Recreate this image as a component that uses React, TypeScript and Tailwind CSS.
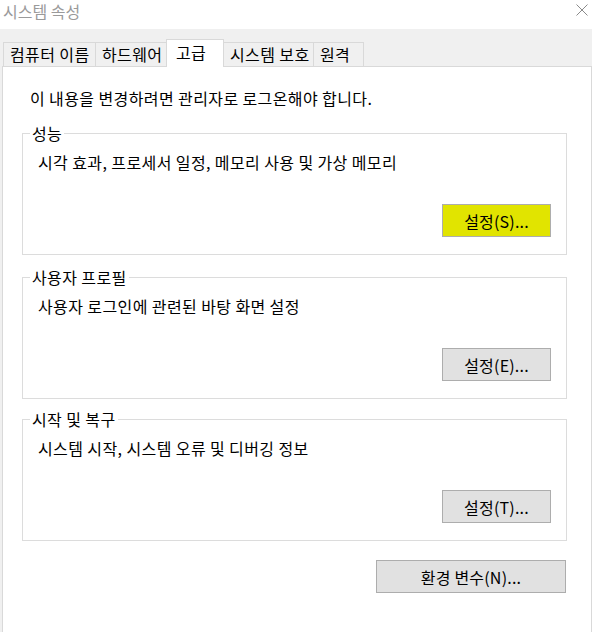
import type { ReactNode } from 'react';

const FONT = { fontFamily: '"Malgun Gothic", "Noto Sans CJK KR", "Noto Sans", sans-serif' };

const tabs = [
  { label: '컴퓨터 이름', w: 'w-[93px]' },
  { label: '하드웨어', w: 'w-[72px]' },
  { label: '고급', w: 'w-[58px]', active: true },
  { label: '시스템 보호', w: 'w-[91px]' },
  { label: '원격', w: 'w-[51px]' },
];

function WinButton({ children, highlight, className = '' }: { children: ReactNode; highlight?: boolean; className?: string }) {
  return (
    <button
      type="button"
      className={`h-[33px] border border-[#adadad] text-[16px] tracking-[0.2px] leading-none text-black flex items-center justify-center ${
        highlight ? 'bg-[#e1e400]' : 'bg-[#e1e1e1]'
      } ${className}`}
    >
      {children}
    </button>
  );
}

function Group({
  title,
  text,
  button,
  highlight,
  className = '',
}: {
  title: string;
  text: string;
  button: string;
  highlight?: boolean;
  className?: string;
}) {
  return (
    <fieldset className={`ml-[19px] w-[545px] border border-[#dcdcdc] px-[15px] pb-[17px] ${className}`}>
      <legend className="-ml-[8px] px-[2px] text-[16px] tracking-[0.4px] leading-[20px] text-black">{title}</legend>
      <p className="mt-[9px] text-[16px] tracking-[0.4px] leading-[20px] text-black">{text}</p>
      <div className="mt-[32px] flex justify-end">
        <WinButton highlight={highlight} className="w-[109px]">
          {button}
        </WinButton>
      </div>
    </fieldset>
  );
}

export default function App() {
  return (
    <div className="w-[592px] h-[632px] bg-white overflow-hidden" style={FONT}>
      {/* Title bar */}
      <div className="h-[29px] flex items-start justify-between pt-[1px] pl-[3px] pr-[4px]">
        <span className="text-[16px] leading-[20px] text-[#9a9a9a]">시스템 속성</span>
        <svg width="12" height="12" viewBox="0 0 12 12" className="mt-[3px]">
          <path d="M0.5 0.5 L11.5 11.5 M11.5 0.5 L0.5 11.5" stroke="#8a8a8a" strokeWidth="1" />
        </svg>
      </div>

      <div className="bg-[#f0f0f0] h-full pt-[10px] pl-[2px]">
        {/* Tabs */}
        <div className="flex items-end h-[27px] pl-[1px] relative z-10">
          {tabs.map((t, i) =>
            t.active ? (
              <div
                key={t.label}
                className={`${t.w} h-[28px] -mb-[1px] -ml-[1px] pl-[9px] bg-white border border-b-0 border-[#d9d9d9] text-[16px] tracking-[0.4px] leading-[24px] text-black`}
              >
                {t.label}
              </div>
            ) : (
              <div
                key={t.label}
                className={`${t.w} h-[24px] pl-[6px] bg-[#f0f0f0] border border-b-0 border-[#d9d9d9] text-[16px] tracking-[0.4px] leading-[22px] text-black whitespace-nowrap ${
                  i > 0 ? '-ml-[1px]' : ''
                }`}
              >
                {t.label}
              </div>
            ),
          )}
        </div>

        {/* Panel */}
        <div className="w-[590px] h-[570px] bg-white border border-[#d9d9d9]">
          <p className="ml-[27px] mt-[21px] text-[16px] tracking-[0.4px] leading-[20px] text-black">
            이 내용을 변경하려면 관리자로 로그온해야 합니다.
          </p>
          <div className="mt-[15px] flex flex-col">
            <Group title="성능" text="시각 효과, 프로세서 일정, 메모리 사용 및 가상 메모리" button="설정(S)..." highlight />
            <Group className="mt-[12px]" title="사용자 프로필" text="사용자 로그인에 관련된 바탕 화면 설정" button="설정(E)..." />
            <Group className="mt-[10px]" title="시작 및 복구" text="시스템 시작, 시스템 오류 및 디버깅 정보" button="설정(T)..." />
          </div>
          <div className="mt-[19px] flex justify-end pr-[25px]">
            <WinButton className="w-[190px]">환경 변수(N)...</WinButton>
          </div>
        </div>
      </div>
    </div>
  );
}
